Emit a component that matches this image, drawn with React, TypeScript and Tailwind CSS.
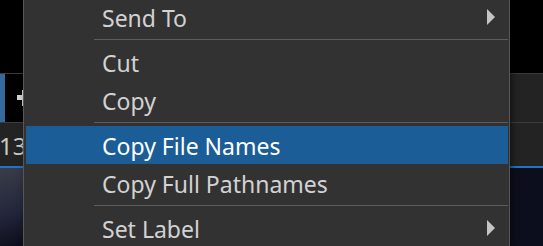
import type { ReactNode } from "react";

const font = { fontFamily: '"Noto Sans", "Open Sans", sans-serif' };

type Entry =
  | { kind: "item"; label: string; submenu?: boolean; active?: boolean }
  | { kind: "sep" };

const entries: Entry[] = [
  { kind: "item", label: "Send To", submenu: true },
  { kind: "sep" },
  { kind: "item", label: "Cut" },
  { kind: "item", label: "Copy" },
  { kind: "sep" },
  { kind: "item", label: "Copy File Names", active: true },
  { kind: "item", label: "Copy Full Pathnames" },
  { kind: "sep" },
  { kind: "item", label: "Set Label", submenu: true },
];

function SubArrow() {
  return (
    <svg width="8" height="16" viewBox="0 0 8 16" className="shrink-0">
      <path d="M0 0 L8 8 L0 16 Z" fill="#c4c4c4" />
    </svg>
  );
}

function MenuItem({
  label,
  submenu,
  active,
}: {
  label: string;
  submenu?: boolean;
  active?: boolean;
}) {
  return (
    <div
      className={`flex h-[38px] items-center justify-between pl-[76px] pr-[13px] text-[23px] leading-none ${
        active ? "bg-[#1b5d96] text-white" : "text-[#d2d2d2]"
      }`}
    >
      <span className="pt-[3px]">{label}</span>
      {submenu ? <SubArrow /> : null}
    </div>
  );
}

function Separator() {
  return (
    <div className="flex h-[7px] items-center pl-[68px]">
      <div className="h-px w-full bg-[#5c5c5c]" />
    </div>
  );
}

function ContextMenu() {
  return (
    <div className="absolute left-[23px] top-[-3px] w-[487px] border border-[#575757] bg-[#323232] pl-[2px] pr-px shadow-[2px_2px_6px_rgba(0,0,0,0.5)]">
      {entries.map((e, i) =>
        e.kind === "sep" ? (
          <Separator key={i} />
        ) : (
          <MenuItem key={i} label={e.label} submenu={e.submenu} active={e.active} />
        ),
      )}
    </div>
  );
}

function Backdrop({ children }: { children?: ReactNode }) {
  return (
    <div className="flex h-full flex-col">
      <div className="h-[73px] bg-black" />
      <div className="flex h-[49px] border-t border-[#3a3a3a] bg-[#232323]">
        <div className="w-[5px] bg-[#35689d]" />
        <div className="flex w-[40px] items-center bg-black pl-[12px]">
          <div className="relative h-[16px] w-[16px]">
            <div className="absolute left-0 top-[5px] h-[5px] w-[16px] bg-[#d4d4d4]" />
            <div className="absolute left-[5px] top-0 h-[16px] w-[5px] bg-[#d4d4d4]" />
          </div>
        </div>
        <div className="flex-1" />
      </div>
      <div className="flex h-[44px] items-center border-t border-[#3c3c3c] bg-[#232323] pl-0 text-[24px] text-[#c8c8c8]">
        <span className="-ml-[1px] pt-[2px]">13</span>
      </div>
      <div className="h-[2px] bg-[#1f74c4]" />
      <div className="flex-1 bg-[#0d0e1d] bg-[linear-gradient(160deg,#3a3d4a_0%,#23253a_18%,#0d0e1d_30%)]" />
      {children}
    </div>
  );
}

export default function App() {
  return (
    <div
      className="relative h-[246px] w-[543px] overflow-hidden bg-black"
      style={font}
    >
      <Backdrop />
      <ContextMenu />
    </div>
  );
}
